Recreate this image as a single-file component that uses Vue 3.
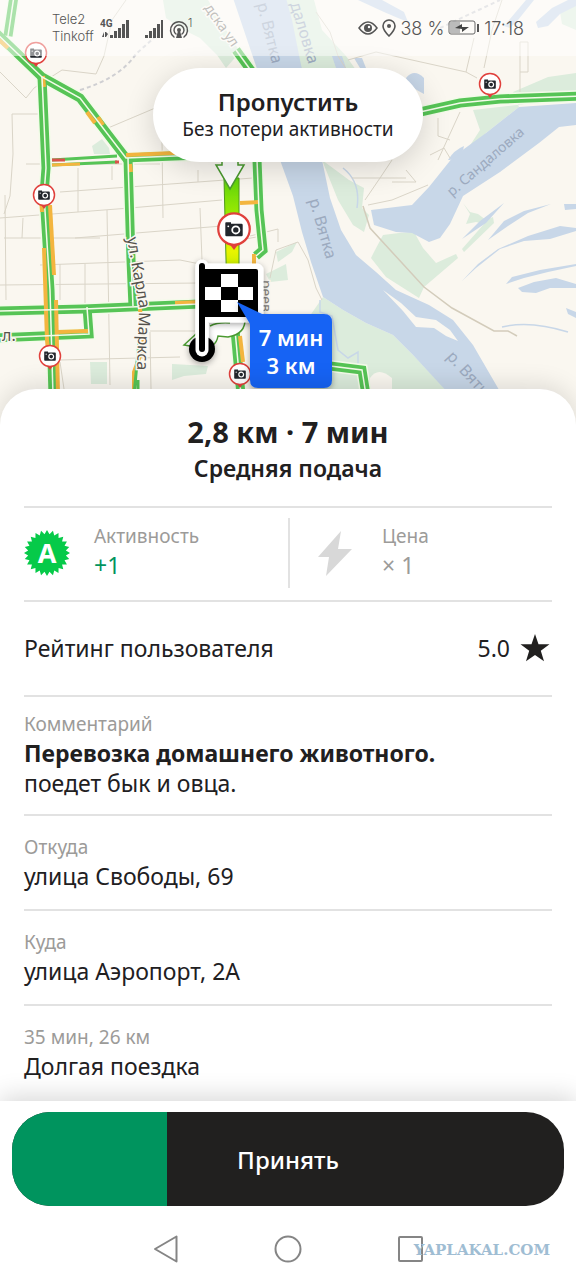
<script setup>
import { computed } from 'vue'

const progress = 28

const cameras = [
  { x: 36, y: 53, s: 1 },
  { x: 44, y: 195, s: 1 },
  { x: 50, y: 356, s: 1 },
  { x: 240, y: 374, s: 1 },
  { x: 490, y: 84, s: 1 },
  { x: 234, y: 229, s: 1.5 }
]

// double-lane roads with live traffic
const roads = [
  'M14 -4L8 36',
  'M-4 33L42 77L80 98L126 158L200 155',
  'M42 77L46 168L44 195L50 290L53 395',
  'M236 50L252 72',
  'M128 158L131 260L133 306',
  'M257 160L259 210L263 250L256 256',
  'M-4 311L84 309L200 304',
  'M87 307L89 334L-4 338',
  'M420 112L460 103L500 99L580 96',
  'M330 366L362 370L366 395',
  'M235 330L241 395'
]

const slowdowns = [
  'M-2 39L8 48',
  'M43 76L44 87',
  'M87 112L95 123',
  'M98 117L103 125',
  'M126 155L175 153',
  'M41 196L42 212',
  'M44 248L47 340L49 360',
  'M50 205L54 275',
  'M56 300L58 395',
  'M58 332L88 331',
  'M175 303L200 302',
  'M240 203L259 202',
  'M254 254L254 268',
  'M240 336L243 362',
  'M130 164L131 172',
  'M135 262L139 300L144 345L134 372L134 395'
]

const rows = [
  { label: 'Откуда', value: 'улица Свободы, 69' },
  { label: 'Куда', value: 'улица Аэропорт, 2А' },
  { label: '35 мин, 26 км', value: 'Долгая поездка' }
]

const badgePoints = computed(() => {
  const teeth = 24
  const pts = []
  for (let i = 0; i < teeth * 2; i++) {
    const r = i % 2 ? 19 : 23
    const a = (Math.PI * i) / teeth - Math.PI / 2
    pts.push(`${(23 + r * Math.cos(a)).toFixed(2)},${(23 + r * Math.sin(a)).toFixed(2)}`)
  }
  return pts.join(' ')
})
</script>

<template>
  <div class="screen">
    <header class="map">
      <svg class="map-canvas" viewBox="0 0 576 430" preserveAspectRatio="xMidYMin slice" role="img" aria-label="Карта">
        <defs>
          <linearGradient id="route" x1="0" y1="0" x2="0" y2="1">
            <stop offset="0" stop-color="#5fd40c" />
            <stop offset="0.35" stop-color="#a5ee00" />
            <stop offset="0.6" stop-color="#e8f400" />
            <stop offset="1" stop-color="#7fdc00" />
          </linearGradient>
          <filter id="soft" x="-30%" y="-30%" width="160%" height="160%">
            <feDropShadow dx="0" dy="2" stdDeviation="3" flood-opacity="0.35" />
          </filter>
        </defs>
        <rect width="576" height="430" fill="#faf7f0" />

        <!-- parks -->
        <g fill="#dcecdc">
          <path d="M163 0H208L226 30L240 52L226 68L217 55L200 38L180 28L166 18Z" />
          <path d="M284 0H314L322 30L346 56L356 70H296L288 40Z" />
          <path d="M322 160L349 180L364 188L362 208L369 215L364 232L353 225L338 200Z" />
          <path d="M383 235L399 233L414 232L423 248L436 263L456 254L458 258L424 287L419 298L386 277L371 258L374 252Z" />
          <path d="M469 147L480 130L473 110L576 98V73L548 77L513 92L519 107L486 133L473 150Z" />
          <path d="M463 203L470 212L478 214L486 220L493 217L494 223L464 252L462 249L484 224L476 222L466 224L470 214Z" />
          <path d="M323 297L343 310L366 323L393 335L413 355L448 392H300V330Z" />
          <path d="M560 12L576 0V30L562 24Z" />
          <path d="M92 146L102 139L109 148L110 154H94Z" />
          <path d="M90 362H107V384H91Z" />
          <path d="M172 364L208 366L206 374L184 376L172 380Z" />
          <path d="M276 252L297 242L292 252L278 262ZM266 274L286 264L288 280L270 282Z" />
        </g>
        <path d="M370 378q8 -12 22 0v16h-22v-12z" fill="#faf7f0" />

        <!-- water -->
        <g fill="#c8d7e8">
          <path d="M233 -2H286L292 20L300 60L322 160L330 198L341 230L356 255L376 272L396 290L429 305L453 320L473 345L502 395H450L413 355L393 335L366 323L343 310L323 297L311 262L302 232L293 196L280 160L256 66Z" />
          <path d="M576 103L519 107L486 133L453 157L429 187L412 205L371 210L374 225L396 232L412 233L429 242L440 238L450 224L463 196L500 172L539 143L559 127L576 125Z" />
          <path d="M406 78q8 -10 18 0v16q-8 -4 -16 -10z" />
          <path d="M354 58l8 0l4 10l-6 0zM332 56h10l4 12h-10z" />
          <path d="M448 160q6 -10 16 -14q0 8 -14 14z" />
          <path d="M358 0H382L404 12L408 22L398 18L384 12Z" />
          <path d="M504 26L526 0H534L518 20L510 28ZM536 22L552 8L576 -4V6L560 14L548 26L538 28Z" />
          <path d="M462 239L480 221L504 203L486 223ZM488 240L504 221L524 211L551 204L528 213L508 226Z" />
          <path d="M462 281L478 264L498 249L528 236L560 226L576 228V231L550 239L524 241L500 249L476 268Z" />
          <path d="M506 284L512 277L540 270L576 264V266L548 272L524 278Z" />
          <path d="M518 288L534 282L556 278L576 284V288L550 288L536 293L522 292Z" />
          <path d="M564 204H576V209L565 210ZM566 308L576 312V318L568 314Z" />
        </g>
        <path d="M383 290L401 303L416 317L436 320L450 330L458 341L446 336L434 328L416 327L403 311Z" fill="#faf7f0" />
        <path d="M502 327Q530 320 568 332M320 300v12l12 4l6 34l10 8l10 -6v20M343 168q18 14 14 40" fill="none" stroke="#c8d7e8" stroke-width="1.5" />

        <!-- minor streets -->
        <g class="streets">
          <path d="M0 72L26 98L34 88L62 70L96 74L104 56L112 20L126 0" />
          <path d="M12 114H40M12 114L13 154L10 196L4 214M26 164H160M60 192L253 178M78 168V212M112 166V180M162 140L163 218M198 170V182M108 128L160 106L176 96" />
          <path d="M0 218L130 208L222 200M4 238L100 238M75 238L222 226M40 265L180 260L200 264M0 285L200 283M107 210L110 385M200 208L202 260M23 218L22 238M60 264V300M85 264V306M60 362L64 389M5 195L6 300M150 331H195M60 360L180 357M150 332L151 389" />
          <path d="M348 60L376 52L466 72L477 78M466 72L474 38M484 68L492 30L502 0M520 92V42H528V72H520M460 112L438 160M438 118V136L450 140M430 155L444 148L450 158M352 178H406M365 200L380 178L392 160M392 182H416L406 170M368 205L392 200L428 185M316 12L330 32L338 56L348 72" />
          <path d="M363 206L370 228L424 287L452 308L494 331L508 331L517 336" class="trail" />
          <path d="M270 278L276 250L298 242L308 260L316 288L322 300M250 236L278 229L278 242M240 240L262 236" />
          <path d="M80 90Q120 78 136 54L156 36" class="rail" />
          <path d="M440 28L500 0" class="rail" />
        </g>

        <g class="road-case"><path v-for="d in roads" :key="d" :d="d" /></g>
        <g class="road"><path v-for="d in roads" :key="d" :d="d" /></g>
        <g class="road-slow"><path v-for="d in slowdowns" :key="d" :d="d" /></g>
        <g class="road-line"><path v-for="d in roads" :key="d" :d="d" /></g>

        <g fill="none" stroke-width="3">
          <path d="M52 160L117 156" stroke="#56c456" />
          <path d="M52 165L117 162" stroke="#56c456" />
          <path d="M52 160H65M115 162H119" stroke="#d9534a" />
          <path d="M52 165L80 164" stroke="#f3b53f" />
          <path d="M139 342L134 395M138 380V395" stroke="#56c456" />
        </g>

        <g class="map-label water-label">
          <text transform="translate(257 4) rotate(76)">р. Вятка</text>
          <text transform="translate(290 4) rotate(73)">даловка</text>
          <text transform="translate(309 200) rotate(74)">р. Вятка</text>
          <text transform="translate(452 197) rotate(-41)" class="water-label--small">р. Сандаловка</text>
          <text transform="translate(446 357) rotate(48)">р. Вятка</text>
        </g>
        <g class="map-label street-label">
          <text transform="translate(204 8) rotate(55)" class="street-label--faint">дска ул</text>
          <text transform="translate(127 238) rotate(80)">ул. Карла</text>
          <text transform="translate(139 312) rotate(92)">Маркса</text>
          <text transform="translate(261 280) rotate(90)" class="street-label--faint">реев</text>
          <text transform="translate(2 341)">л.</text>
        </g>

        <!-- route -->
        <path d="M224 178H239V300H227Z" fill="url(#route)" stroke="#4f9a1c" />
        <path d="M222 148V165H216L230 189L244 165H238V148Z" fill="#fff" stroke="#4a9a30" stroke-width="1.5" />
        <path d="M184 345L196 334L210 320L245 318Q246 334 228 337L218 336Q216 348 202 348Z" fill="#fff" stroke="#4a9a30" stroke-width="1.5" />
        <path d="M210 326q8 -4 20 -3" fill="none" stroke="#4a9a30" stroke-width="1.5" />

        <!-- speed cameras -->
        <g v-for="c in cameras" :key="c.x + '-' + c.y" :transform="`translate(${c.x} ${c.y}) scale(${c.s})`">
          <path d="M-3 10L0 14L3 10Z" fill="#e0403c" />
          <circle r="10.5" fill="#fff" stroke="#e0403c" stroke-width="1.5" />
          <path d="M-5.500 -4.500H-2V-3.500H5Q5.800 -3.500 5.800 -2.700V4Q5.800 4.800 5 4.800H-5Q-5.800 4.800 -5.800 4V-4Z" fill="#22262c" />
          <circle cx="1.200" cy="0.600" r="2.400" fill="none" stroke="#fff" stroke-width="1.200" />
          <circle cx="-3.800" cy="-1.800" r="0.600" fill="#fff" />
        </g>

        <!-- finish flag -->
        <g filter="url(#soft)">
          <path d="M202 266V350M203 270H257V316H203Z" fill="none" stroke="#fff" stroke-width="13" stroke-linecap="round" stroke-linejoin="round" />
          <circle cx="202" cy="349" r="13" />
        </g>
        <path d="M202 268V350" stroke="#fff" stroke-width="13" stroke-linecap="round" />
        <rect x="200" y="269" width="58" height="48" rx="2" />
        <path d="M202 266V349" stroke="#000" stroke-width="6" stroke-linecap="round" />
        <path d="M221 274h17v13h15v13h-15v12h-17v-12h-16v-13h16zM221 287v13h17v-13z" fill="#fff" fill-rule="evenodd" />

        <!-- ETA callout -->
        <path d="M237 302L262 314H324Q332 314 332 322V380Q332 388 324 388H258Q250 388 250 380V324Z" fill="#1764f4" filter="url(#soft)" />
        <g class="eta">
          <text x="291" y="346">7 мин</text>
          <text x="291" y="374">3 км</text>
        </g>
      </svg>

      <div class="status">
        <div class="carriers">
          <span>Tele2</span>
          <span>Tinkoff</span>
        </div>
        <svg width="94" height="26" viewBox="0 0 94 26" aria-hidden="true">
          <g fill="#555">
            <text x="0" y="12" class="net">4G</text>
            <path d="M2 22l2 -5v5h1v-5h1v5zM6 17v5l2 -3z" />
            <path d="M10 20h3v3h-3zM14 16h3v7h-3zM18 13h3v10h-3zM22 9h3v14h-3zM26 5h3v18h-3z" />
            <path d="M45 20h3v3h-3zM49 16h3v7h-3zM53 13h3v10h-3zM57 9h3v14h-3zM61 5h2v18h-2z" />
            <circle cx="79" cy="15" r="2" />
            <path d="M78 16h2l2 7h-6z" />
            <text x="88" y="12" class="net-thin">1</text>
          </g>
          <g fill="none" stroke="#555" stroke-width="1.500" stroke-linecap="round">
            <path d="M76 19A5 5 0 1 1 82 19M74 22A8.500 8.500 0 1 1 84 22" />
          </g>
        </svg>
        <div class="status-right">
          <svg width="20" height="16" viewBox="0 0 20 16" aria-hidden="true">
            <path d="M1 8Q10 -4 19 8Q10 20 1 8Z" fill="none" stroke="#555" stroke-width="1.500" />
            <circle cx="10" cy="8" r="4" fill="#555" />
            <circle cx="11" cy="7" r="1.200" fill="#fff" />
          </svg>
          <svg width="14" height="18" viewBox="0 0 14 18" aria-hidden="true">
            <path d="M7 17Q1 11 1 7A6 6 0 0 1 13 7Q13 11 7 17Z" fill="none" stroke="#555" stroke-width="1.600" />
            <circle cx="7" cy="7" r="2" fill="#555" />
          </svg>
          <span>38 %</span>
          <svg width="32" height="16" viewBox="0 0 32 16" aria-hidden="true">
            <rect x="1" y="1" width="26" height="13" rx="2" fill="none" stroke="#666" />
            <rect x="2" y="2" width="10" height="11" fill="#bbb" />
            <path d="M7 8L14 4L14 7H21L14 12L14 9Z" fill="#444" />
            <path d="M29 4h2v8h-2z" fill="#555" />
          </svg>
          <time>17:18</time>
        </div>
      </div>

      <button type="button" class="skip">
        <span class="skip-title">Пропустить</span>
        <span class="skip-note">Без потери активности</span>
      </button>
    </header>

    <main class="sheet">
      <div class="summary">
        <h1>2,8 км · 7 мин</h1>
        <p>Средняя подача</p>
      </div>

      <div class="metrics">
        <div class="metric">
          <svg width="46" height="46" viewBox="0 0 46 46" aria-hidden="true">
            <polygon :points="badgePoints" fill="#06ca49" />
            <text x="23" y="33" class="badge-letter">A</text>
          </svg>
          <div class="metric-text">
            <div class="label">Активность</div>
            <div class="value value--good">+1</div>
          </div>
        </div>
        <div class="metric metric--split">
          <svg width="46" height="46" viewBox="0 0 46 46" aria-hidden="true">
            <path d="M29 1L6 27H17L14 46L40 19H26Z" fill="#d8d8d8" />
          </svg>
          <div class="metric-text">
            <div class="label">Цена</div>
            <div class="value value--muted">× 1</div>
          </div>
        </div>
      </div>

      <div class="row row--rating">
        <span class="value">Рейтинг пользователя</span>
        <span class="rating">
          <span class="value">5.0</span>
          <svg width="30" height="28" viewBox="0 0 30 28" aria-hidden="true">
            <path d="M15 0L18.500 10.300H29.500L20.800 16.800L24 27.300L15 21L6 27.300L9.200 16.800L0.500 10.300H11.500Z" fill="#21201f" />
          </svg>
        </span>
      </div>

      <div class="row row--comment">
        <div class="label">Комментарий</div>
        <div class="value"><b>Перевозка домашнего животного.</b></div>
        <div class="value">поедет бык и овца.</div>
      </div>

      <div v-for="r in rows" :key="r.label" class="row">
        <div class="label">{{ r.label }}</div>
        <div class="value">{{ r.value }}</div>
      </div>
    </main>

    <footer class="bottom">
      <button type="button" class="accept">
        <span class="accept-progress" :style="{ width: progress + '%' }"></span>
        <span class="accept-text">Принять</span>
      </button>
      <nav class="nav">
        <button type="button" aria-label="Назад">
          <svg width="28" height="30" viewBox="0 0 28 30"><path d="M24.500 2.500V27.500L3 15Z" /></svg>
        </button>
        <button type="button" aria-label="Домой">
          <svg width="28" height="30" viewBox="0 0 28 30"><circle cx="14" cy="15" r="12.500" /></svg>
        </button>
        <button type="button" aria-label="Недавние">
          <svg width="28" height="30" viewBox="0 0 28 30"><rect x="3" y="3" width="23" height="24" rx="1" /></svg>
        </button>
        <span class="watermark">YAPLAKAL.COM</span>
      </nav>
    </footer>
  </div>
</template>

<style>
body {
  margin: 0;
  background: #fff;
}
</style>

<style scoped>
.screen {
  display: flex;
  flex-direction: column;
  min-height: 100vh;
  overflow: hidden;
  background: #fff;
  color: #21201f;
  font-family: "Noto Sans", "Open Sans", sans-serif;
}
button {
  border: none;
  padding: 0;
  background: none;
  font-family: inherit;
  color: inherit;
  cursor: pointer;
}

.map {
  position: relative;
  display: flex;
  flex-direction: column;
  align-items: center;
  gap: 12px;
  height: 430px;
  overflow: hidden;
}
.map-canvas {
  position: absolute;
  inset: 0;
  width: 100%;
  height: 100%;
}
.streets path {
  fill: none;
  stroke: #dad5c8;
  stroke-width: 1;
}
.streets .trail {
  stroke: #d3ccbb;
  stroke-width: 1.5;
}
.streets .rail {
  stroke: #cfcfd2;
  stroke-width: 2;
  stroke-dasharray: 4 3;
}
.road-case path {
  fill: none;
  stroke: #f3fbe9;
  stroke-width: 12;
}
.road path {
  fill: none;
  stroke: #56c456;
  stroke-width: 9;
}
.road-slow path {
  fill: none;
  stroke: #f3b53f;
  stroke-width: 4;
}
.road-line path {
  fill: none;
  stroke: #f3fbe9;
  stroke-width: 1.5;
}
.map-label {
  font-size: 16px;
}
.water-label {
  fill: #9caabf;
}
.water-label--small {
  font-size: 14px;
}
.street-label {
  fill: #55524c;
  stroke: #faf7f0;
  stroke-width: 3;
  paint-order: stroke;
}
.street-label--faint {
  fill: #85827c;
  font-size: 14px;
}
.eta {
  fill: #fff;
  font-size: 22px;
  font-weight: 600;
  text-anchor: middle;
}

.status {
  position: relative;
  display: flex;
  align-items: center;
  box-sizing: border-box;
  width: 100%;
  height: 56px;
  padding: 0 52px;
  background: rgba(255, 255, 255, 0.5);
  color: #555;
  font-family: Inter, Roboto, sans-serif;
  font-weight: 300;
}
.carriers {
  display: flex;
  flex-direction: column;
  width: 48px;
  font-size: 13px;
  line-height: 17px;
}
.net {
  font-family: Roboto, sans-serif;
  font-size: 10px;
  font-weight: 700;
}
.net-thin {
  font-size: 11px;
}
.status-right {
  display: flex;
  align-items: center;
  gap: 4px;
  margin-left: auto;
  font-size: 18px;
}

.skip {
  position: relative;
  display: flex;
  flex-direction: column;
  align-items: center;
  justify-content: center;
  width: 270px;
  height: 94px;
  border-radius: 47px;
  background: #fff;
  box-shadow: 0 6px 30px rgba(0, 0, 0, 0.16);
}
.skip-title {
  font-size: 24px;
  font-weight: 600;
  line-height: 28px;
}
.skip-note {
  font-size: 19px;
  line-height: 26px;
}

.sheet {
  position: relative;
  flex: 1;
  margin-top: -41px;
  padding: 0 24px;
  border-radius: 36px 36px 0 0;
  background: #fff;
  box-shadow: 0 -4px 24px rgba(0, 0, 0, 0.12);
}
.summary {
  padding: 24px 0 21px;
  border-bottom: 2px solid #e2e2e2;
  text-align: center;
}
.summary h1 {
  margin: 0;
  font-size: 29px;
  font-weight: 700;
  line-height: 38px;
}
.summary p {
  margin: 0;
  font-size: 23px;
  font-weight: 600;
  line-height: 34px;
}
.label {
  color: #9c9b99;
  font-size: 19px;
  line-height: 28px;
}
.value {
  font-size: 23px;
  line-height: 30px;
}
.value--good {
  color: #00945e;
}
.value--muted {
  color: #9c9b99;
}

.metrics {
  display: grid;
  grid-template-columns: 1fr 1fr;
  padding: 10px 0 12px;
  border-bottom: 2px solid #e2e2e2;
}
.metric {
  display: flex;
  align-items: center;
  gap: 24px;
  height: 70px;
}
.metric--split {
  padding-left: 22px;
  border-left: 2px solid #e2e2e2;
}
.metric-text {
  padding-bottom: 4px;
}
.badge-letter {
  fill: #fff;
  font-size: 27px;
  font-weight: 700;
  text-anchor: middle;
}

.row {
  padding: 17px 0 18px;
  border-bottom: 2px solid #e2e2e2;
}
.row:last-child {
  padding-bottom: 17px;
  border-bottom: none;
}
.row--rating {
  display: flex;
  align-items: center;
  justify-content: space-between;
  padding: 31px 0 32px;
}
.rating {
  display: flex;
  align-items: center;
  gap: 10px;
  padding-right: 2px;
}
.row--comment {
  padding: 13px 0 16px;
}

.bottom {
  position: relative;
  padding: 11px 12px 0;
  background: #fff;
  box-shadow: 0 -4px 24px rgba(0, 0, 0, 0.16);
}
.accept {
  position: relative;
  display: block;
  width: 100%;
  height: 94px;
  overflow: hidden;
  border-radius: 38px;
  background: #21201f;
  color: #fff;
}
.accept-progress {
  position: absolute;
  inset: 0 auto 0 0;
  background: #00945e;
}
.accept-text {
  position: relative;
  font-size: 24px;
  font-weight: 500;
}
.nav {
  position: relative;
  display: flex;
  justify-content: center;
  align-items: center;
  gap: 94px;
  height: 74px;
}
.nav button {
  display: flex;
  margin-top: 12px;
}
.nav svg {
  fill: none;
  stroke: #858585;
  stroke-width: 2;
  stroke-linejoin: round;
}
.watermark {
  position: absolute;
  right: 14px;
  bottom: 20px;
  color: #9fbdd3;
  font-family: "DejaVu Serif", serif;
  font-size: 15px;
  font-weight: 900;
  line-height: 20px;
}
</style>
